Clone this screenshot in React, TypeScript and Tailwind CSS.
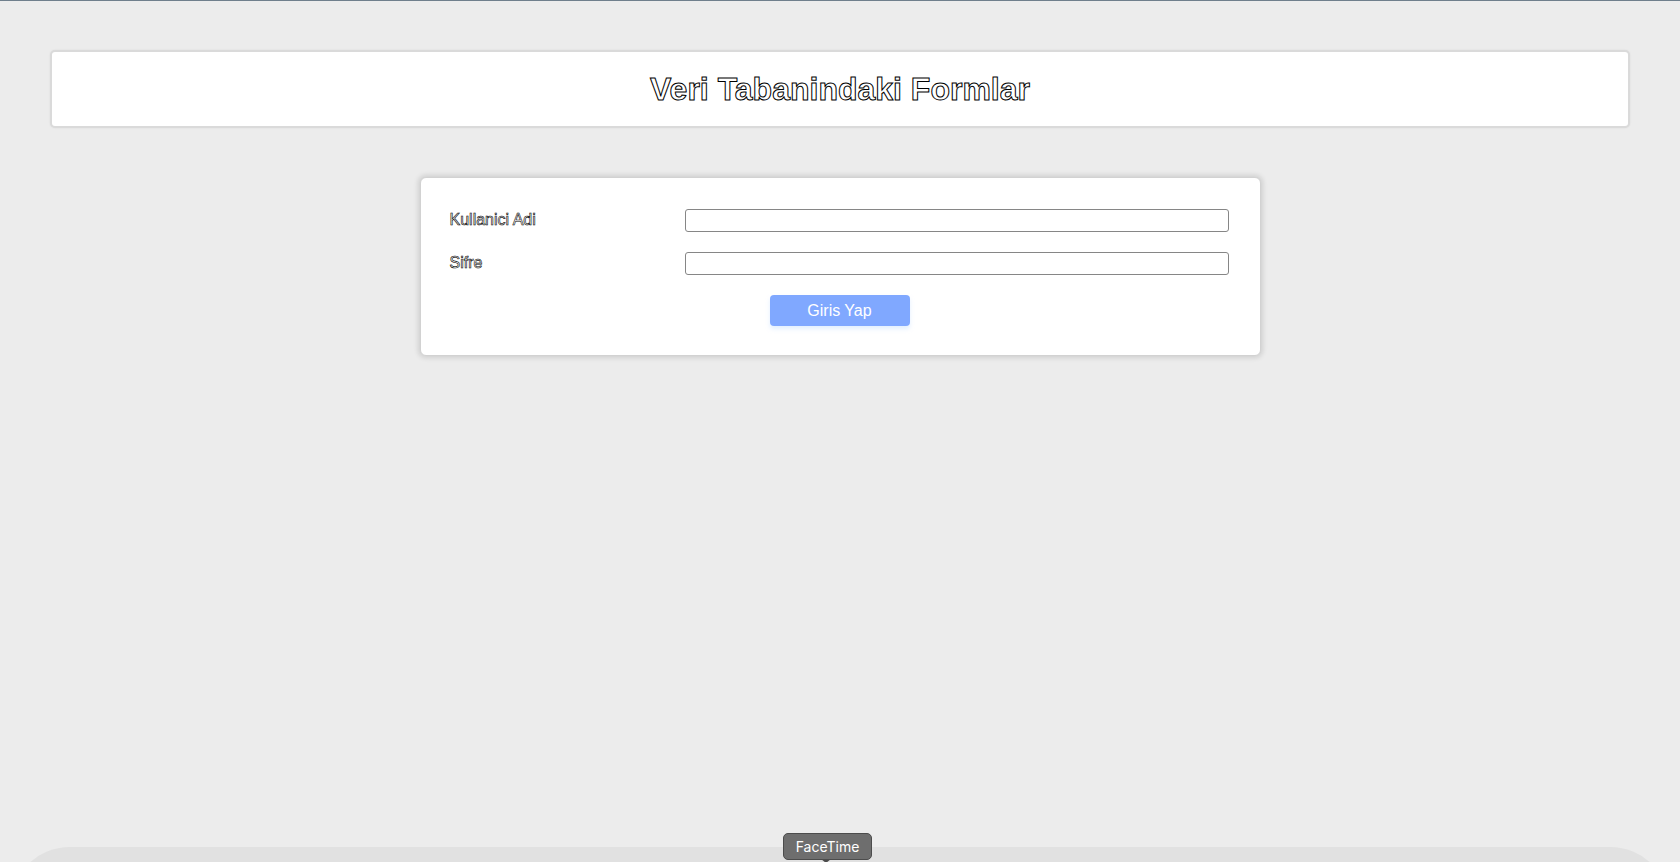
const App = () => {
  return (
    <div className="relative h-[862px] overflow-hidden bg-[#ececec] font-['Liberation_Sans',Arial,sans-serif]">
      {/* ust cizgi */}
      <div className="h-px bg-[#6f7f8c]" />

      <div className="px-[50px] pt-[49px]">
        {/* baslik */}
        <div className="flex h-[78px] items-center justify-center rounded-[5px] border-2 border-[#dadada] bg-white shadow-[0_0_2px_rgba(0,0,0,0.08)]">
          <h1 className="text-[32px] font-bold text-white [-webkit-text-stroke:1px_#000]">
            Veri Tabanindaki Formlar
          </h1>
        </div>

        {/* giris formu */}
        <div className="mx-auto mt-[49px] h-[179px] w-[841px] rounded-[6px] border border-[#d2d2d2] bg-white pl-[29px] pt-[30px] shadow-[0_0_5px_2px_rgba(0,0,0,0.12)]">
          <div className="flex items-center">
            <label className="w-[235px] text-[16px] text-white [-webkit-text-stroke:0.6px_#000]">
              Kullanici Adi
            </label>
            <input
              type="text"
              className="h-[23px] w-[544px] rounded-[3px] border border-[#868686] bg-white"
            />
          </div>
          <div className="mt-[19px] flex items-center">
            <label className="w-[235px] text-[16px] text-white [-webkit-text-stroke:0.6px_#000]">
              Sifre
            </label>
            <input
              type="password"
              className="h-[23px] w-[544px] rounded-[3px] border border-[#868686] bg-white"
            />
          </div>
          <div className="mt-[20px] pl-[320px]">
            <button className="h-[31px] w-[140px] rounded-[4px] bg-[#80a8ff] text-[16px] text-white shadow-[0_3px_4px_rgba(200,225,255,0.5)]">
              Giris Yap
            </button>
          </div>
        </div>
      </div>

      {/* dock */}
      <div className="absolute left-[10px] right-[10px] top-[847px] h-[60px] rounded-t-[75px] bg-[#e1e1e1]" />
      <div className="absolute left-[783px] top-[833px] flex h-[27px] w-[89px] items-center justify-center rounded-[5px] border border-[#4c4c4c] bg-[#6e6e6e] font-['Inter',sans-serif] text-[14px] text-white">
        FaceTime
      </div>
      <div className="absolute left-[821px] top-[859px] h-0 w-0 border-x-[5px] border-t-[4px] border-x-transparent border-t-[#4c4c4c]" />
    </div>
  );
};

export default App;
